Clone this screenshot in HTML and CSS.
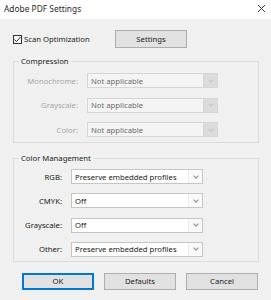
FILE: index.html
```html
<!DOCTYPE html>
<html lang="en">
<head>
  <meta charset="UTF-8">
  <title>Adobe PDF Settings</title>
  <link rel="stylesheet" href="styles.css">
</head>
<body>
  <div class="dialog">
    <div class="titlebar">
      <span class="title">Adobe PDF Settings</span>
      <svg class="close" width="9" height="9" viewBox="0 0 9 9"><path d="M1 1 L8 8 M8 1 L1 8" stroke="#333" stroke-width="1"/></svg>
    </div>

    <div class="content">
      <div class="top-row">
        <label class="check">
          <span class="box"><svg width="9" height="9" viewBox="0 0 9 9"><path d="M1.5 4.5 L3.5 6.5 L7.5 2" fill="none" stroke="#222" stroke-width="1"/></svg></span>
          Scan Optimization
        </label>
        <button class="btn settings-btn">Settings</button>
      </div>

      <fieldset class="group compression">
        <legend>Compression</legend>
        <span class="lbl disabled">Monochrome:</span>
        <div class="select is-disabled"><span>Not applicable</span><i class="arrow"></i></div>
        <span class="lbl disabled">Grayscale:</span>
        <div class="select is-disabled"><span>Not applicable</span><i class="arrow"></i></div>
        <span class="lbl disabled">Color:</span>
        <div class="select is-disabled"><span>Not applicable</span><i class="arrow"></i></div>
      </fieldset>

      <fieldset class="group color-mgmt">
        <legend>Color Management</legend>
        <span class="lbl">RGB:</span>
        <div class="select"><span>Preserve embedded profiles</span><i class="arrow"></i></div>
        <span class="lbl">CMYK:</span>
        <div class="select"><span>Off</span><i class="arrow"></i></div>
        <span class="lbl">Grayscale:</span>
        <div class="select"><span>Off</span><i class="arrow"></i></div>
        <span class="lbl">Other:</span>
        <div class="select"><span>Preserve embedded profiles</span><i class="arrow"></i></div>
      </fieldset>

      <div class="actions">
        <button class="btn primary">OK</button>
        <button class="btn">Defaults</button>
        <button class="btn">Cancel</button>
      </div>
    </div>
  </div>
</body>
</html>
```

FILE: styles.css
```css
body {
  margin: 0;
  padding: 0;
  background: #f0f0f0;
  font-family: "Noto Sans", "Open Sans", sans-serif;
  font-size: 7.7px;
  color: #1a1a1a;
}

.dialog {
  width: 271px;
  height: 300px;
  background: #f0f0f0;
}

.titlebar {
  height: 19px;
  background: #fff;
  display: flex;
  align-items: center;
  justify-content: space-between;
  padding: 0 5px 3px 4px;
  box-sizing: border-box;
}

.title {
  font-size: 8.4px;
  color: #2a2a2a;
}

.close {
  display: block;
}

.content {
  padding: 0 12px 0 13px;
}

.top-row {
  display: flex;
  align-items: center;
  height: 18px;
  margin-top: 11px;
}

.check {
  display: flex;
  align-items: center;
  width: 102px;
}

.box {
  width: 9px;
  height: 9px;
  border: 1px solid #333;
  box-sizing: border-box;
  background: #fff;
  margin-right: 2px;
  display: flex;
}

.box svg {
  margin: -1px;
}

.btn {
  font-family: inherit;
  font-size: 7.7px;
  color: #1a1a1a;
  background: #e1e1e1;
  border: 1px solid #adadad;
  width: 72px;
  height: 17px;
  padding: 0;
}

.settings-btn {
  height: 18px;
}

.btn.primary {
  border: 1px solid #0078d7;
  box-shadow: inset 0 0 0 1px #0078d7;
}

.group {
  margin: 0;
  border: 1px solid #dcdcdc;
  padding: 0;
  display: grid;
  row-gap: 9.5px;
  align-items: center;
  width: 246px;
  box-sizing: border-box;
}

.group legend {
  padding: 0 2px;
  margin-left: 5px;
  line-height: 12px;
  font-size: 7.7px;
  color: #1a1a1a;
}

.compression {
  margin-top: 7px;
  grid-template-columns: 64px 131px;
  column-gap: 9px;
  padding-top: 6px;
  padding-bottom: 5px;
}

.color-mgmt {
  margin-top: 9px;
  grid-template-columns: 48px 132px;
  column-gap: 9px;
  row-gap: 9.3px;
  padding-top: 5px;
  padding-bottom: 4px;
}

.lbl {
  text-align: right;
  color: #1a1a1a;
}

.lbl.disabled {
  color: #a6a6a6;
}

.select {
  height: 15px;
  box-sizing: border-box;
  border: 1px solid #c6c6c6;
  background: #fff;
  display: flex;
  align-items: center;
}

.select span {
  flex: 1;
  padding-left: 3px;
  white-space: nowrap;
  overflow: hidden;
}

.select .arrow {
  width: 13px;
  height: 13px;
  background: #f9f9f9;
  border-left: 1px solid #ececec;
  display: flex;
  align-items: center;
  justify-content: center;
}

.select .arrow::after {
  content: "";
  width: 3px;
  height: 3px;
  border-right: 1px solid #8a8a8a;
  border-bottom: 1px solid #8a8a8a;
  transform: rotate(45deg);
  margin-top: -2px;
}

.select.is-disabled {
  background: #f4f4f4;
  border-color: #d6d6d6;
  color: #6a6a6a;
}

.select.is-disabled .arrow {
  background: #dcdcdc;
  border-left: 1px solid #d6d6d6;
}

.select.is-disabled .arrow::after {
  border-color: #c4c4c4;
}

.actions {
  display: flex;
  gap: 10px;
  padding-left: 9px;
  margin-top: 11px;
}
```
